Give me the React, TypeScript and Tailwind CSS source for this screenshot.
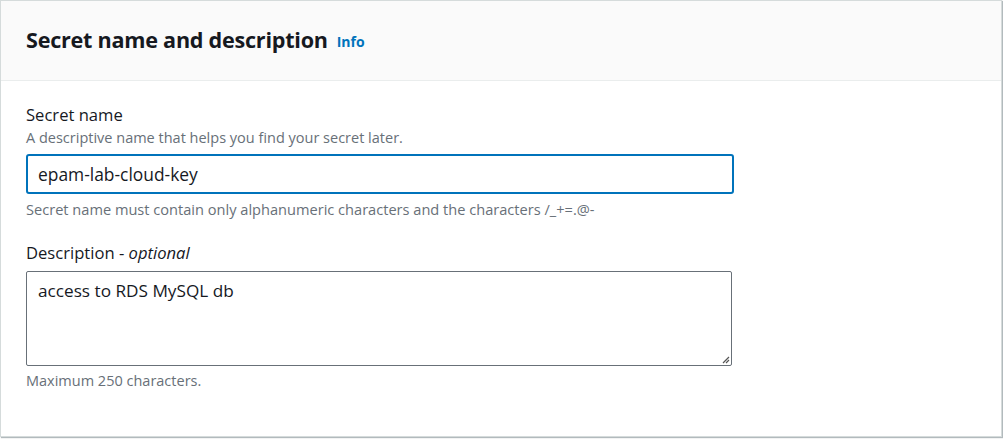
import React from 'react';

const App = () => {
  return (
    <div className="w-[1003px] h-[439px] bg-white" style={{ fontFamily: '"Open Sans", Arial, sans-serif' }}>
      <div className="w-[1002px] h-[437px] border border-[#d5dbdb] bg-white shadow-[1px_1px_1px_rgba(0,28,36,0.3)]">
        {/* Header */}
        <div className="h-[80px] bg-[#fafafa] border-b border-[#eaeded] flex items-center px-[25px]">
          <h2 className="text-[21.6px] font-bold text-[#16191f] tracking-[-0.25px] -mt-[1px]">Secret name and description</h2>
          <a className="ml-[9px] mt-[2px] text-[14px] font-bold text-[#0073bb]">Info</a>
        </div>

        {/* Body */}
        <div className="px-[25px] pt-[23px]">
          <label className="block text-[16.6px] leading-[22px] text-[#16191f]">Secret name</label>
          <p className="mt-[3px] text-[14.5px] leading-[18px] text-[#687078]">A descriptive name that helps you find your secret later.</p>
          <div className="mt-[7px] w-[708px] h-[40px] border-2 border-[#0073bb] rounded-[3px] flex items-center px-[10px]">
            <span className="text-[17.4px] text-[#16191f]">epam-lab-cloud-key</span>
          </div>
          <p className="mt-[6px] text-[14.6px] leading-[18px] text-[#687078]">
            Secret name must contain only alphanumeric characters and the characters /_+=.@-
          </p>

          <label className="block mt-[24px] text-[16.6px] leading-[22px] text-[#16191f]">
            Description - <i>optional</i>
          </label>
          <div className="relative mt-[7px] w-[706px] h-[95px] border border-[#687078] rounded-[2px] px-[11px] pt-[6px]">
            <span className="text-[17.2px] text-[#16191f]">access to RDS MySQL db</span>
            <svg className="absolute right-[1px] bottom-[1px]" width="9" height="9" viewBox="0 0 9 9">
              <path d="M8 2 L2 8 M8 5 L5 8" stroke="#555" strokeWidth="1.2" />
            </svg>
          </div>
          <p className="mt-[6px] text-[14.5px] leading-[18px] text-[#687078]">Maximum 250 characters.</p>
        </div>
      </div>
    </div>
  );
};

export default App;
